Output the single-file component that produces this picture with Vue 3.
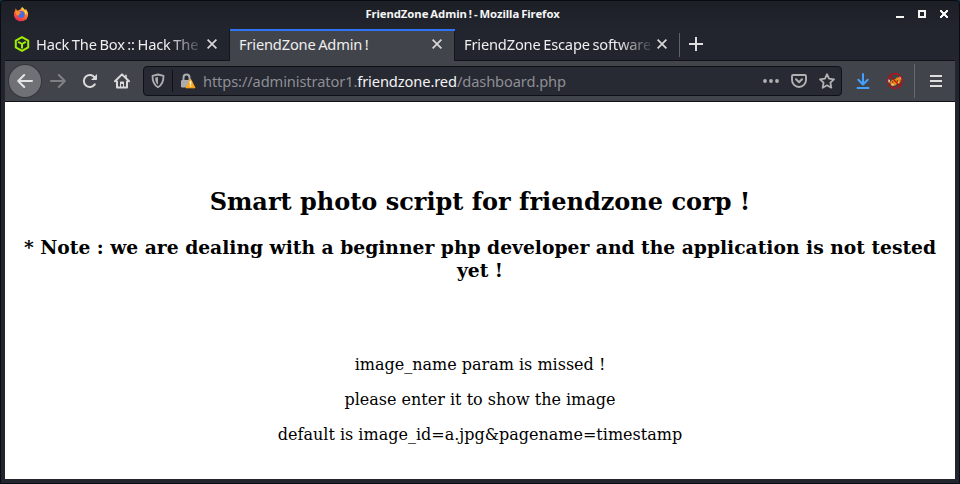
<script setup>
import { ref } from 'vue'

const tabs = ref([
  { title: 'Hack The Box :: Hack The', icon: true, active: false },
  { title: 'FriendZone Admin !', icon: false, active: true },
  { title: 'FriendZone Escape software', icon: false, active: false },
])
const messages = [
  'image_name param is missed !',
  'please enter it to show the image',
  'default is image_id=a.jpg&pagename=timestamp',
]
</script>

<template>
  <div class="desktop">
    <div class="window">
      <header class="titlebar">
        <svg class="firefox" viewBox="0 0 16 16">
          <defs>
            <linearGradient id="flame" x1="0.8" y1="0" x2="0.3" y2="1">
              <stop offset="0" stop-color="#ffd94a" />
              <stop offset="0.45" stop-color="#ff7a2c" />
              <stop offset="1" stop-color="#e9254f" />
            </linearGradient>
          </defs>
          <path fill="url(#flame)" d="M2.5 2.4 4.2 4.5 6 4.3 7.7 3 9 1l2.2 2 .7 1.6L13 3.2l2 3.3.1 3.2-1.5 3.5L10.2 15l-4 .2-3.4-1.8L1 10l.1-3.4 1-1.9Z" />
          <circle cx="8.2" cy="8.4" r="3.5" fill="#4c68dc" />
          <path fill="#ff8a2b" d="M2.4 5.2 6.4 5.5 8.2 7 6.3 8.1 6 9.6 3.3 9Z" />
          <path fill="#ffcf43" d="M9 1c0 3 3.4 3.2 3.1 8L14 7l-1-4-.8 1.5Z" />
        </svg>
        <h1 class="wintitle">FriendZone Admin ! - Mozilla Firefox</h1>
        <svg class="wincontrols" viewBox="0 0 54 10" shape-rendering="crispEdges">
          <path fill="#f4f4f4" d="M0 7h8v2H0Z" />
          <path fill="none" stroke="#f4f4f4" stroke-width="2" d="M23 2h6v6h-6Z" />
          <path fill="#f4f4f4" d="M44 1h2v1h1v1h2V2h1V1h2v2h-1v1h-1v2h1v1h1v2h-2V8h-1V7h-2v1h-1v1h-2V7h1V6h1V4h-1V3h-1Z" />
        </svg>
      </header>

      <nav class="tabs">
        <div v-for="tab in tabs" :key="tab.title" class="tab" :class="{ active: tab.active }">
          <svg v-if="tab.icon" class="favicon" viewBox="0 0 16 16">
            <path fill="none" stroke="#9fef00" stroke-width="2" stroke-linejoin="round" d="m8 1.2 6.2 3.4v6.8L8 14.8l-6.2-3.4V4.6ZM4.200 5.800 8 8l3.800-2.200M8 8v4.500" />
          </svg>
          <span class="tabtitle" :class="{ fade: !tab.active }">{{ tab.title }}</span>
          <svg class="close" viewBox="0 0 10 10">
            <path fill="none" stroke="#d8d8d8" stroke-width="1.7" d="m.6.6 8.8 8.8M9.4.6.6 9.4" />
          </svg>
        </div>
        <div class="newtab">
          <svg viewBox="0 0 14 14" shape-rendering="crispEdges">
            <path fill="#dedede" d="M6 0h2v6h6v2H8v6H6V8H0V6h6Z" />
          </svg>
        </div>
      </nav>

      <div class="toolbar">
        <div class="back">
          <svg viewBox="0 0 16 16">
            <path fill="none" stroke="#e4e4e4" stroke-width="2" stroke-linecap="round" stroke-linejoin="round" d="M15 8H1.3M7.2 2 1.2 8l6 6" />
          </svg>
        </div>
        <svg class="forward" viewBox="0 0 16 16">
          <path fill="none" stroke="#7f8084" stroke-width="2" stroke-linecap="round" stroke-linejoin="round" d="M1 8h13.7M8.8 2l6 6-6 6" />
        </svg>
        <svg class="reload" viewBox="0 0 16 16">
          <path fill="none" stroke="#dadada" stroke-width="2" stroke-linecap="round" d="M12.8 11.4A6 6 0 1 1 12.8 4.6" />
          <path fill="#dadada" d="M15 1v5.3a.7.7 0 0 1-.7.7H9Z" />
        </svg>
        <svg class="home" viewBox="0 0 16 16">
          <path fill="none" stroke="#dadada" stroke-width="2" stroke-linecap="round" stroke-linejoin="round" d="M1 8.3 8 1.4l7 6.9M3 8.5v6h10v-6" />
          <path fill="#dadada" d="M6 14V9.2q0-.7.7-.7h2.6q.7 0 .7.7V14H9v-3H7v3ZM11.2 1.7h1.6V5h-1.6Z" />
        </svg>

        <div class="urlbar">
          <svg class="shield" viewBox="0 0 14 16">
            <path fill="none" stroke="#adadb1" stroke-width="1.8" stroke-linejoin="round" d="M7 1.5 12.5 2.8c.1 5.4-.8 8.900-5.500 11.500C2.300 11.700 1.400 8.200 1.500 2.800Z" />
            <path fill="#adadb1" d="M7 4v7.700C4.600 10 4.200 7.800 4.200 4.800Z" />
          </svg>
          <i class="rule"></i>
          <svg class="lock" viewBox="0 0 16 16">
            <path fill="none" stroke="#adadb1" stroke-width="2" d="M3.500 7.500V4.400a3 3 0 0 1 6 0v3.100" />
            <rect x="1" y="7" width="10.5" height="7.5" rx="1.3" fill="#adadb1" />
            <path fill="#ffa91a" stroke="#ffa91a" stroke-width="1" stroke-linejoin="round" d="m10.500 6 4.500 8.800H6Z" />
            <path fill="#fff" d="M9.800 8h1.400v3.500H9.800Zm0 4.400h1.400v1.400H9.800Z" />
          </svg>
          <span class="url">https://administrator1.<b>friendzone.red</b>/dashboard.php</span>
          <svg class="dots" viewBox="0 0 16 4">
            <g fill="#b1b1b4"><circle cx="2" cy="2" r="1.9" /><circle cx="8" cy="2" r="1.9" /><circle cx="14" cy="2" r="1.9" /></g>
          </svg>
          <svg class="pocket" viewBox="0 0 16 16">
            <path fill="none" stroke="#b1b1b4" stroke-width="1.9" stroke-linejoin="round" d="M2.2 2h11.6q1.2 0 1.2 1.2V7A7 7 0 0 1 1 7V3.2Q1 2 2.2 2Z" />
            <path fill="none" stroke="#b1b1b4" stroke-width="2" stroke-linecap="round" stroke-linejoin="round" d="M5 6.3 8 9.2l3-2.9" />
          </svg>
          <svg class="star" viewBox="0 0 16 16">
            <path fill="none" stroke="#b1b1b4" stroke-width="1.8" stroke-linejoin="round" d="m8 1.2 2 4.5 5 .6-3.6 3.4.9 5L8 12.3l-4.3 2.4.9-5L1 6.3l5-.6Z" />
          </svg>
        </div>

        <svg class="download" viewBox="0 0 14 16">
          <path fill="none" stroke="#45a1ff" stroke-width="2" stroke-linecap="round" stroke-linejoin="round" d="M7 1v10M2.3 6.8 7 11.5l4.7-4.7M1.5 15h11" />
        </svg>
        <svg class="foxyproxy" viewBox="0 0 16 16">
          <path fill="#e88913" d="M3 9.500 5 6.800l3-.6 2-1.700 3.200-.5.400 4.500-1.600 2.200-2.200.3-1.500 1.600-3.800.4Z" />
          <path fill="#f8eadc" d="m1 5 2 2.500L2.300 10 1 9ZM12.600 2.700l2 1.500.2 3-1-.4Z" />
          <path fill="#f1c899" d="m4 11 1.700-.4 1.600 1.200-1.500 1ZM10.500 9.700l1.800-.7-.8 1.900Z" />
          <path fill="#5a2c12" d="M5 8.300h1.200v1.200H5ZM9.800 7.200H11v1.200H9.800Z" />
          <g fill="none" stroke="#c9090d" stroke-width="1.2"><circle cx="8" cy="8" r="7.3" /><path d="m2.800 2.800 10.400 10.400" /></g>
        </svg>
        <i class="toolrule"></i>
        <svg class="menu" viewBox="0 0 12 12" shape-rendering="crispEdges">
          <path fill="#dedede" d="M0 0h12v2H0Zm0 5h12v2H0Zm0 5h12v2H0Z" />
        </svg>
      </div>

      <main class="page">
        <h2>Smart photo script for friendzone corp !</h2>
        <h3>* Note : we are dealing with a beginner php developer and the application is not tested yet !</h3>
        <section>
          <p v-for="line in messages" :key="line">{{ line }}</p>
        </section>
      </main>
    </div>
  </div>
</template>

<style>
body { margin: 0; overflow: hidden; }
</style>

<style scoped>
* { box-sizing: border-box; }
svg { display: block; flex: none; }
.desktop { width: 960px; height: 484px; background: #123249; }
.window {
  width: 960px; height: 484px; padding: 0 4px 4px;
  display: flex; flex-direction: column;
  border: 1px solid #0b0c11; border-radius: 4px 4px 1px 1px;
  background: linear-gradient(#1d1f27, #23252e 28px);
  font-family: "Noto Sans", sans-serif;
}
.titlebar {
  height: 28px; flex: none; padding: 0 5px 2px 8px;
  display: grid; grid-template-columns: 54px 1fr 54px; align-items: center;
}
.firefox { width: 16px; height: 16px; }
.wintitle { margin: 0; padding-right: 38px; text-align: center; white-space: nowrap; color: #f5f5f5; font-size: 11.3px; line-height: 16px; font-weight: 700; letter-spacing: -0.06px; word-spacing: -0.85px; }
.wincontrols { width: 54px; height: 10px; }
.tabs { height: 32px; flex: none; display: flex; border-bottom: 1px solid #13141a; }
.tab { width: 225px; height: 32px; padding: 0 13px 2px 9px; display: flex; align-items: center; color: #eeeeef; }
.tab:nth-child(3) { width: 224px; padding-right: 12px; }
.tab.active {
  background: #42444b; border-top: 2px solid #2f74f4; padding-bottom: 4px;
  box-shadow: -1px 0 #15161b, inset -1px 0 #15161b;
}
.favicon { width: 16px; height: 16px; margin-right: 6px; }
.tabtitle { flex: 1; min-width: 0; white-space: nowrap; font-size: 14.67px; line-height: 20px; letter-spacing: -0.18px; word-spacing: -1px; }
.tab .close { width: 10px; height: 10px; margin-left: 7px; }
.fade { -webkit-mask-image: linear-gradient(90deg, #000 calc(100% - 32px), rgba(0, 0, 0, 0.15)); mask-image: linear-gradient(90deg, #000 calc(100% - 32px), rgba(0, 0, 0, 0.15)); }
.newtab { height: 24px; align-self: center; padding-left: 9px; display: flex; align-items: center; border-left: 1px solid #606168; }
.newtab svg { width: 14px; height: 14px; margin-bottom: 2px; }
.toolbar { height: 41px; flex: none; display: flex; align-items: center; background: #42444b; border-bottom: 1px solid #111217; }
.back { width: 32px; height: 32px; margin-left: 4px; display: grid; place-items: center; border-radius: 50%; background: #707176; box-shadow: 0 0 0 1px #35363b; }
.back svg { width: 16px; height: 16px; }
.forward { width: 16px; height: 16px; margin-left: 9px; }
.reload { width: 16px; height: 16px; margin-left: 16px; }
.home { width: 16px; height: 16px; margin-left: 16px; }
.urlbar { width: 699px; height: 30px; margin-left: 13px; padding: 0 6px 0 7px; display: flex; align-items: center; background: #272933; border: 1px solid #101116; border-radius: 4px; }
.shield { width: 14px; height: 16px; }
.rule { width: 1px; height: 22px; margin-left: 7px; background: #101116; }
.lock { width: 16px; height: 16px; margin-left: 7px; }
.url { margin: 0 auto 0 7px; white-space: nowrap; color: #8e8f94; font-size: 14.67px; line-height: 22px; letter-spacing: -0.115px; }
.url b { color: #f4f4f5; font-weight: 400; }
.dots { width: 16px; height: 4px; margin-right: 12px; }
.pocket { width: 16px; height: 16px; margin-right: 12px; }
.star { width: 16px; height: 16px; }
.download { width: 14px; height: 16px; margin-left: 14px; }
.foxyproxy { width: 16px; height: 16px; margin-left: 17px; }
.toolrule { width: 1px; height: 34px; margin-left: 11px; background: #68696e; }
.menu { width: 12px; height: 12px; margin-left: 15px; }
.page { flex: 1; min-height: 0; padding: 86px 8px 0; overflow: hidden; background: #fff; color: #000; text-align: center; font-family: "DejaVu Serif", serif; }
.page h2 { margin: 0; font-size: 24px; line-height: 28px; }
.page h3 { margin: 20px 0 0; font-size: 18.72px; line-height: 23px; }
.page section { margin-top: 73px; }
.page p { margin: 0 0 16px; font-size: 16px; line-height: 19px; }
</style>
